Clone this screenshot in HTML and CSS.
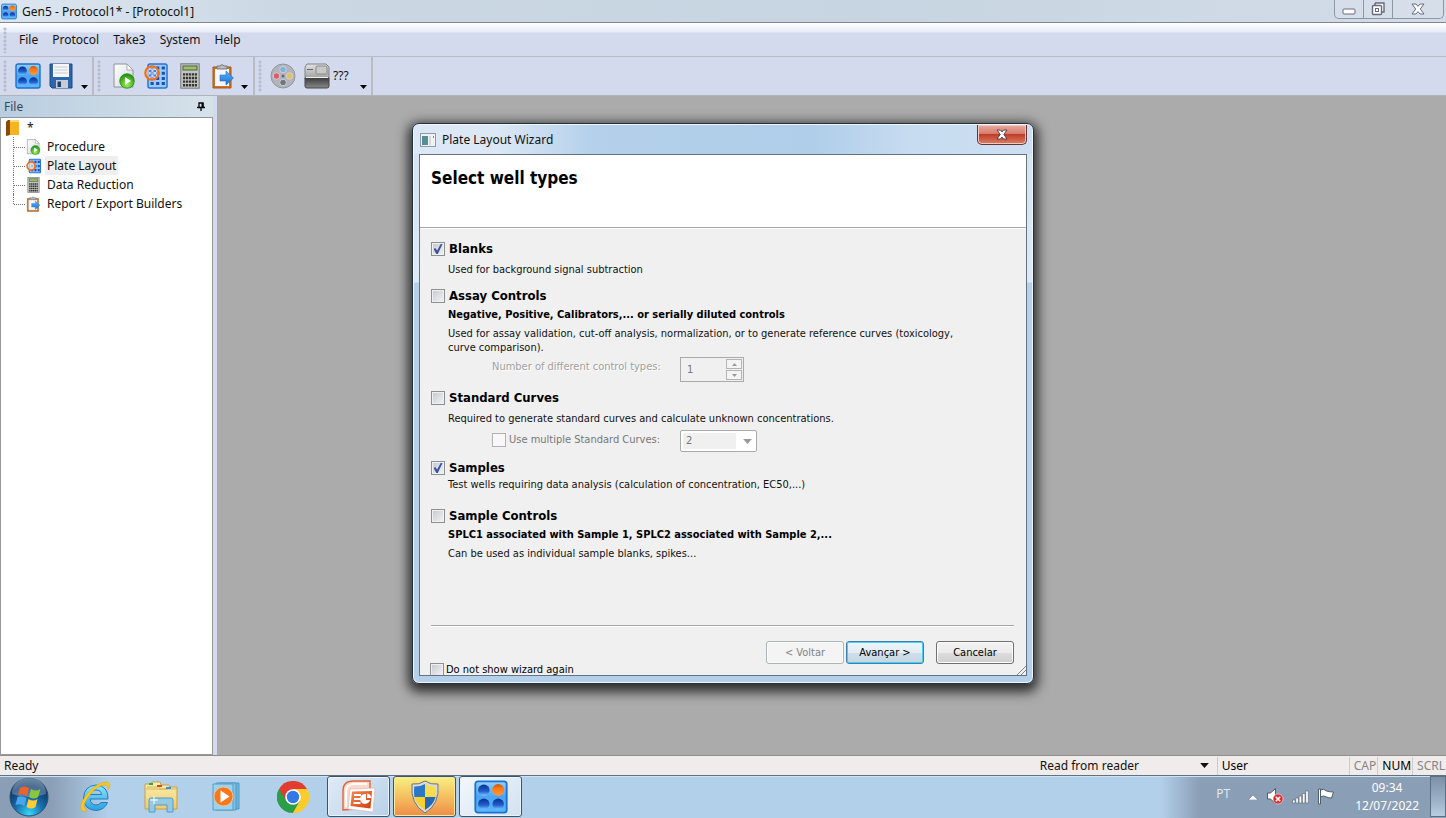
FILE: index.html
```html
<!DOCTYPE html>
<html lang="pt">
<head>
<meta charset="utf-8">
<title>Gen5 - Protocol1* - [Protocol1]</title>
<link rel="stylesheet" href="styles.css">
</head>
<body>
<svg class="defs" width="0" height="0" aria-hidden="true">
  <defs>
    <linearGradient id="gBlue" x1="0" y1="0" x2="0" y2="1"><stop offset="0" stop-color="#8fd0ff"/><stop offset=".5" stop-color="#4aa4f4"/><stop offset="1" stop-color="#5ab8fa"/></linearGradient>
    <linearGradient id="gWell" x1="0" y1="0" x2="0" y2="1"><stop offset="0" stop-color="#0b2f8c"/><stop offset=".6" stop-color="#2160d0"/><stop offset="1" stop-color="#7cc4ff"/></linearGradient>
    <linearGradient id="gOrange" x1="0" y1="0" x2="0" y2="1"><stop offset="0" stop-color="#c65a14"/><stop offset=".4" stop-color="#ff7a14"/><stop offset="1" stop-color="#ff9a3c"/></linearGradient>
    <linearGradient id="gPage" x1="0" y1="0" x2="1" y2="1"><stop offset="0" stop-color="#fff"/><stop offset="1" stop-color="#d4d8dc"/></linearGradient>
    <radialGradient id="gGreen" cx=".5" cy=".75" r=".7"><stop offset="0" stop-color="#9cf04c"/><stop offset="1" stop-color="#1f9416"/></radialGradient>
    <linearGradient id="gSilver" x1="0" y1="0" x2="0" y2="1"><stop offset="0" stop-color="#e4e4e4"/><stop offset="1" stop-color="#9c9c9c"/></linearGradient>
    <linearGradient id="gDark" x1="0" y1="0" x2="0" y2="1"><stop offset="0" stop-color="#3c3c3c"/><stop offset="1" stop-color="#8a8a8a"/></linearGradient>
    <linearGradient id="gArrow" x1="0" y1="0" x2="0" y2="1"><stop offset="0" stop-color="#5ab4fa"/><stop offset="1" stop-color="#1b6fd6"/></linearGradient>
    <radialGradient id="gOrb" cx=".5" cy=".95" r=".95"><stop offset="0" stop-color="#35d8fa"/><stop offset=".4" stop-color="#1670ae"/><stop offset=".75" stop-color="#0f3c6c"/><stop offset="1" stop-color="#3c6288"/></radialGradient>
    <linearGradient id="gIe" x1="0" y1="0" x2="0" y2="1"><stop offset="0" stop-color="#8ce6fc"/><stop offset="1" stop-color="#2b9fe0"/></linearGradient>
    <linearGradient id="gFolder" x1="0" y1="0" x2="0" y2="1"><stop offset="0" stop-color="#fdf0b4"/><stop offset="1" stop-color="#eecb6c"/></linearGradient>
    <linearGradient id="gPpt" x1="0" y1="0" x2="1" y2="1"><stop offset="0" stop-color="#f48a54"/><stop offset="1" stop-color="#d23c0c"/></linearGradient>
  </defs>
  <symbol id="plate" viewBox="0 0 26 26">
    <rect x="1" y="1" width="24" height="24" rx="2" fill="url(#gBlue)" stroke="#1c72cc" stroke-width="1.4"/>
    <ellipse cx="7.5" cy="7.8" rx="4.4" ry="4.3" fill="url(#gWell)"/><ellipse cx="18.5" cy="7.6" rx="4.6" ry="4.5" fill="url(#gOrange)"/>
    <ellipse cx="7.5" cy="18.4" rx="4.4" ry="4.2" fill="url(#gWell)"/><ellipse cx="18.5" cy="18.4" rx="4.4" ry="4.2" fill="url(#gWell)"/>
  </symbol>
  <symbol id="procedure" viewBox="0 0 22 26">
    <path d="M1 1h13l6 6v17H1z" fill="url(#gPage)" stroke="#8c9298"/><path d="M14 1v6h6z" fill="#fff" stroke="#9aa0a6" stroke-width=".8"/>
    <circle cx="14" cy="18" r="7.3" fill="url(#gGreen)" stroke="#1b8016" stroke-width=".7"/><path d="M12 14l6 4-6 4z" fill="#fff"/>
  </symbol>
  <symbol id="wells" viewBox="0 0 24 26">
    <rect x="4" y="1" width="19" height="24" rx="2" fill="#9cccff" stroke="#2476d8" stroke-width="1.5"/>
    <path d="M6.5 5H22M6.5 10.2H22M6.5 15.4H22M6.5 20.6H22" stroke="#1d4fb4" stroke-width="3" stroke-dasharray="3.2 2.4"/>
    <circle cx="8" cy="10" r="6.7" fill="#e8edf8" fill-opacity=".55" stroke="#f66e16" stroke-width="2.2"/>
    <path d="M5 8h2.4M9.5 8H12M5 12.4h2.4M9.5 12.4H12" stroke="#4e7fd0" stroke-width="2"/>
  </symbol>
  <symbol id="wells-small" viewBox="0 0 16 16">
    <rect x="3.500" y=".8" width="12" height="14.400" rx="1" fill="#8cc2fc" stroke="#2476d8" stroke-width="1.200"/>
    <path d="M5.500 3.500H15M5.500 8H15M5.500 12.500H15" stroke="#1d4fb4" stroke-width="2.400" stroke-dasharray="2.200 1.300"/>
    <circle cx="5.500" cy="8" r="4.300" fill="#dfe8f6" fill-opacity=".7" stroke="#f66e16" stroke-width="1.900"/>
  </symbol>
  <symbol id="calc" viewBox="0 0 20 26">
    <rect x=".8" y=".8" width="18.4" height="24.4" fill="#c4c4c0" stroke="#777"/><rect x="3" y="3" width="14" height="4" fill="#9cc070" stroke="#4b653b"/>
    <path d="M3 11.4h14M3 15h14M3 18.6h14M3 22.2h14" stroke="#343434" stroke-width="2.4" stroke-dasharray="2.2 .75"/>
  </symbol>
  <symbol id="export" viewBox="0 0 22 26">
    <path d="M1 4h18v21H1z" fill="#c9752c" stroke="#a55617"/><path d="M3 6h14v17H3z" fill="#f6f7fa"/><path d="M5 6V3h3q2-3 4 0h3v3z" fill="#b8bcc2" stroke="#777"/>
    <path d="M8 12h6V8l7.5 7-7.5 7v-4H8z" fill="url(#gArrow)" stroke="#2368c0" stroke-width=".6"/>
  </symbol>
  <symbol id="caret" viewBox="0 0 7 4"><path d="M0 0h7L3.500 4z" fill="currentColor"/></symbol>
</svg>

<div class="desktop">
  <header class="titlebar">
    <svg class="app-icon" width="16" height="17"><use href="#plate"/></svg>
    <h1 class="title">Gen5 - Protocol1* - [Protocol1]</h1>
    <div class="window-controls">
      <button class="ctl" aria-label="Minimize"><svg width="14" height="7"><rect x="1" y="1" width="12" height="5" rx="1" fill="#fff" stroke="#666a80"/></svg></button>
      <button class="ctl" aria-label="Restore"><svg width="14" height="14"><path d="M4 1h9v9h-2M4 1v2" fill="#fff" stroke="#666a80" stroke-width="1.4"/><rect x="1.500" y="3.500" width="9" height="9" rx="1" fill="#fff" stroke="#666a80" stroke-width="1.4"/><rect x="4.500" y="6.500" width="3" height="3" fill="#fff" stroke="#666a80"/></svg></button>
      <button class="ctl ctl-close" aria-label="Close"><svg width="14" height="12"><path d="M1 1h4l2 2.400L9 1h4L9.300 6l3.700 5H9L7 8.600 5 11H1l3.700-5z" fill="#fff" stroke="#666a80"/></svg></button>
    </div>
  </header>

  <nav class="menubar">
    <span class="grip"></span>
    <button class="menu">File</button><button class="menu">Protocol</button><button class="menu">Take3</button><button class="menu">System</button><button class="menu">Help</button>
  </nav>

  <div class="toolbars">
    <div class="toolbar">
      <span class="grip"></span>
      <button class="tool" aria-label="Plate"><svg width="26" height="26"><use href="#plate"/></svg></button>
      <button class="tool" aria-label="Save"><svg width="24" height="26" viewBox="0 0 24 26"><path d="M1 1h22v24H3l-2-2z" fill="#2d66ac" stroke="#1c4a86"/><rect x="4" y="1" width="16" height="13" fill="#f4f6f8"/><path d="M5.500 4h13M5.500 7h13M5.500 10h13" stroke="#c7ccd2"/><rect x="7" y="17" width="12" height="8" fill="#c8cdd4"/><rect x="8.500" y="18.500" width="3.500" height="5.500" fill="#1c4272"/></svg></button>
      <button class="drop" aria-label="More"><svg width="7" height="4"><use href="#caret"/></svg></button>
    </div>
    <div class="toolbar toolbar-wide">
      <span class="grip"></span>
      <button class="tool" aria-label="Procedure"><svg width="22" height="26"><use href="#procedure"/></svg></button>
      <button class="tool" aria-label="Plate layout"><svg width="24" height="26"><use href="#wells"/></svg></button>
      <button class="tool" aria-label="Data reduction"><svg width="20" height="26"><use href="#calc"/></svg></button>
      <button class="tool" aria-label="Export"><svg width="22" height="26"><use href="#export"/></svg></button>
      <button class="drop" aria-label="More"><svg width="7" height="4"><use href="#caret"/></svg></button>
    </div>
    <div class="toolbar toolbar-reader">
      <span class="grip"></span>
      <button class="tool" aria-label="Protocol reel"><svg width="26" height="26" viewBox="0 0 26 26"><circle cx="13" cy="13" r="12" fill="#b2b4bb" stroke="#94969e"/><circle cx="13" cy="6.500" r="3.300" fill="#7fb2de" stroke="#d0d0d6"/><circle cx="6.500" cy="13" r="3.300" fill="#dc5c68" stroke="#d0d0d6"/><circle cx="19.500" cy="13" r="3.300" fill="#e4c05c" stroke="#d0d0d6"/><circle cx="13" cy="19.500" r="3.300" fill="#74767e" stroke="#d0d0d4"/><circle cx="13" cy="13" r="1.500" fill="#686a72"/></svg></button>
      <button class="tool reader" aria-label="Reader"><svg width="26" height="26" viewBox="0 0 26 26"><path d="M3 1h19l3 3v12H1V4z" fill="url(#gSilver)" stroke="#828282"/><path d="M1 15h24v8q0 2-2 2H3q-2 0-2-2z" fill="url(#gDark)" stroke="#444"/><rect x="12" y="3" width="11" height="8" rx="1" fill="#c8c8c8" stroke="#8a8a8a"/><path d="M3 6.500h6" stroke="#666"/><path d="M2 14.500h22" stroke="#eee"/></svg><span>???</span></button>
      <button class="drop" aria-label="More"><svg width="7" height="4"><use href="#caret"/></svg></button>
    </div>
  </div>

  <main class="workspace">
    <aside class="panel">
      <div class="panel-head"><span>File</span><button class="pin" aria-label="Pin"><svg width="8" height="9"><path d="M0 5.500h8M2 5V1h4v4M4 6v3" fill="none" stroke="#000" stroke-width="1.300"/><path d="M4.500 1H6.500v4h-2z"/></svg></button></div>
      <div class="tree">
        <div class="tree-root"><svg width="14" height="16"><path d="M0 2l3-2h10v15H3L0 16z" fill="#f6b420"/><path d="M0 2l2-2h2v15l-4 1z" fill="#8a4a0a"/><path d="M4 0h9v2H4z" fill="#ffd680"/></svg><span>*</span></div>
        <ul class="branches">
          <li><a href="#"><svg width="15" height="16"><use href="#procedure"/></svg><span>Procedure</span></a></li>
          <li><a href="#" class="current"><svg width="15" height="16"><use href="#wells-small"/></svg><span>Plate Layout</span></a></li>
          <li><a href="#"><svg width="15" height="16"><use href="#calc"/></svg><span>Data Reduction</span></a></li>
          <li><a href="#"><svg width="15" height="16"><use href="#export"/></svg><span>Report / Export Builders</span></a></li>
        </ul>
      </div>
    </aside>

    <div class="overlay">
      <section class="dialog" role="dialog" aria-labelledby="dlg-title">
        <header class="dialog-bar">
          <svg width="16" height="14"><rect x=".5" y=".5" width="15" height="13" fill="#f0f2f4" stroke="#909aa6"/><rect x="2" y="3" width="6" height="9" fill="#4f9684"/><path d="M2 3h3v9H2z" fill="#5a86a8" opacity=".6"/><path d="M9 3h2v9H9z" fill="#d5dadf"/><path d="M13 3h1v2h-1z" fill="#62a070"/></svg>
          <h2 class="dialog-title" id="dlg-title">Plate Layout Wizard</h2>
          <button class="dialog-close" aria-label="Close"><svg width="12" height="11"><path d="M1 1h3.500L6 3l1.500-2H11L7.900 5.500 11 10H7.500L6 8l-1.500 2H1l3.100-4.500z" fill="#fff" stroke="#5a3c46"/></svg></button>
        </header>
        <form class="client">
          <div class="client-head"><h3>Select well types</h3></div>
          <div class="client-body">
            <div class="group">
              <label class="head"><input type="checkbox" checked>Blanks</label>
              <p class="desc">Used for background signal subtraction</p>
            </div>
            <div class="group">
              <label class="head"><input type="checkbox">Assay Controls</label>
              <p class="sub">Negative, Positive, Calibrators,... or serially diluted controls</p>
              <p class="desc close">Used for assay validation, cut-off analysis, normalization, or to generate reference curves (toxicology,<br>curve comparison).</p>
              <div class="option">
                <label class="option-label etched" for="types">Number of different control types:</label>
                <div class="spin"><input type="number" id="types" value="1" disabled><span class="spin-buttons"><button type="button" disabled aria-label="Increase"><svg class="up" width="5" height="3"><path d="M0 0h5L2.500 3z" fill="#999"/></svg></button><button type="button" disabled aria-label="Decrease"><svg width="5" height="3"><path d="M0 0h5L2.500 3z" fill="#999"/></svg></button></span></div>
              </div>
            </div>
            <div class="group">
              <label class="head"><input type="checkbox">Standard Curves</label>
              <p class="desc">Required to generate standard curves and calculate unknown concentrations.</p>
              <div class="option option-curves">
                <label class="option-label muted"><input type="checkbox" disabled>Use multiple Standard Curves:</label>
                <div class="combo"><select disabled aria-label="Standard curve count"><option>2</option></select><svg width="9" height="5" viewBox="0 0 7 4"><path d="M0 0h7L3.500 4z" fill="#999"/></svg></div>
              </div>
            </div>
            <div class="group">
              <label class="head"><input type="checkbox" checked>Samples</label>
              <p class="desc tight">Test wells requiring data analysis (calculation of concentration, EC50,...)</p>
            </div>
            <div class="group group-last">
              <label class="head"><input type="checkbox">Sample Controls</label>
              <p class="sub">SPLC1 associated with Sample 1, SPLC2 associated with Sample 2,...</p>
              <p class="desc close">Can be used as individual sample blanks, spikes...</p>
            </div>
            <hr class="rule">
            <div class="actions">
              <button type="button" class="btn" disabled>&lt; Voltar</button>
              <button type="button" class="btn btn-default">Avançar &gt;</button>
              <button type="button" class="btn btn-cancel">Cancelar</button>
            </div>
            <label class="skip"><input type="checkbox">Do not show wizard again</label>
          </div>
          <svg class="sizer" width="9" height="9"><path d="M0 9l9-9M4 9l5-5" stroke="#888" fill="none"/></svg>
        </form>
      </section>
    </div>
  </main>

  <footer class="status">
    <span class="ready">Ready</span>
    <button class="reader-mode">Read from reader<svg width="9" height="5" viewBox="0 0 7 4"><use href="#caret"/></svg></button>
    <span class="cell user">User</span>
    <span class="cell off">CAP</span><span class="cell">NUM</span><span class="cell off">SCRL</span>
  </footer>

  <nav class="taskbar">
    <button class="start" aria-label="Start"><svg width="40" height="40" viewBox="0 0 40 40"><circle cx="20" cy="20" r="19" fill="url(#gOrb)" stroke="#294d70"/><path d="M3 17a17 17 0 0 1 34 0q-17 6-34 0z" fill="#fff" opacity=".25"/>
      <path d="M11 11q4-3 9 0l-2 8q-4-3-9-1z" fill="#f0622c"/><path d="M22 12q5 3 9.500 0l-2.500 8q-4 3-9 0z" fill="#8cc63c"/><path d="M8.500 20q4-2 9 1l-2 8q-4-3-9-1z" fill="#4aa6ec"/><path d="M19.500 22q5 3 9 0l-2 8q-4 3-9 0z" fill="#fccc38"/></svg></button>
    <button class="task" aria-label="Internet Explorer"><svg width="34" height="34" viewBox="0 0 34 34"><path d="M30 19H12q1 6 6 6 3 0 5-2.500h6.500Q26.500 30 18 30.500 6 30 5.500 18 6 6 18 5 30.500 6 30 19zM12 14.500h11.500Q23 10 18 10t-6 4.500z" fill="url(#gIe)" stroke="#1f7cc0"/><path d="M5 31Q-1 27 9 14 19 2 29 2q5 1 1 8 1-5-3-5-8 0-16 11Q2 28 9 30q-2 2-4 1z" fill="#fcc81c" stroke="#dca410" stroke-width=".5"/></svg></button>
    <button class="task" aria-label="Explorer"><svg width="36" height="34" viewBox="0 0 36 34"><path d="M2 4h6l1-2h8l1 3h8l1 2h7v22H2z" fill="url(#gFolder)" stroke="#c8a040"/><path d="M2 9h32M4 7h13M16 9h9" stroke="#d8b458"/><rect x="6" y="3" width="4" height="2" fill="#2cae30"/><rect x="14" y="5" width="5" height="2" fill="#d8442c"/><rect x="23" y="7" width="5" height="2" fill="#3890e0"/><path d="M6 32V20q0-2 2-2h20q2 0 2 2v12h-6v-7H12v7z" fill="#8cc9ec" fill-opacity=".9" stroke="#509cc8"/><path d="M11 16v8M7 20h8" stroke="#fff"/></svg></button>
    <button class="task" aria-label="Media Player"><svg width="32" height="30" viewBox="0 0 32 30"><path d="M8 1h20v26H8z" fill="#6cb4da" stroke="#4c98c4"/><path d="M5 1h20v27H5z" fill="#84c4e4" stroke="#4c98c4"/><path d="M2 2h20v26H2z" fill="#9cd2ee" stroke="#509cc8"/><circle cx="12.500" cy="14.500" r="9.500" fill="#f47820" stroke="#f8c090"/><path d="M9.500 8.500l9 6-9 6z" fill="#fff"/></svg></button>
    <button class="task" aria-label="Chrome"><svg width="32" height="32" viewBox="0 0 32 32"><path d="M16 16L2.100 8A16 16 0 0 1 29.900 8z" fill="#e23c30"/><path d="M16 16L29.900 8A16 16 0 0 1 16 32z" fill="#fccb2c"/><path d="M16 16L16 32A16 16 0 0 1 2.100 8z" fill="#2c9e48"/><path d="M16 8h13.900L23 20z" fill="#fccb2c"/><path d="M22.900 20L16 32l-6-10z" fill="#2c9e48"/><path d="M2.100 8L9 20l7-12z" fill="#e23c30"/><path d="M2.100 8L9 20l7 4-4 7.500A16 16 0 0 1 2.100 8z" fill="#2c9e48"/><path d="M23 20l-7 12A16 16 0 0 0 29.900 8H16z" fill="#fccb2c"/><circle cx="16" cy="16" r="7.800" fill="#fff"/><circle cx="16" cy="16" r="6.200" fill="#3478e8"/></svg></button>
    <button class="task open" aria-label="PowerPoint"><svg width="34" height="34" viewBox="0 0 34 34"><path d="M1 30V11Q1 1 11 1h17v10H13v18z" fill="#fbd8c8" stroke="#e0643c" stroke-width="1.400"/><path d="M4 27V12q0-8 8-8h13" fill="none" stroke="#fff" stroke-width="2"/><path d="M8 9l25-1-2 24-25-3z" fill="#fff" stroke="#dcb8a8" stroke-width=".7"/><path d="M10 11.500l20-.5-1.500 17.500L8.500 26z" fill="url(#gPpt)"/><path d="M12 15h7M12 19h7M11.500 23h7" stroke="#fff" stroke-width="2"/><path d="M24 14a5 5 0 1 0 4 6h-4z" fill="#fff"/><path d="M25 13.500a4.500 4.500 0 0 1 4 4.500h-4z" fill="#fff"/></svg></button>
    <button class="task open attention" aria-label="Security"><svg width="30" height="34" viewBox="0 0 30 34"><path d="M15 1q6 4 13 3 2 20-13 29Q0 24 2 4q7 1 13-3z" fill="#d8dcdc" stroke="#6c7478"/><path d="M15 4v13H4.400Q3.600 12 4.300 6.500 10 6.700 15 4z" fill="#2c78c8"/><path d="M15 4q5 2.700 10.700 2.500Q26.400 12 25.600 17H15z" fill="#f8dc4c"/><path d="M4.400 17H15v13Q6.500 25 4.400 17z" fill="#f8d02c"/><path d="M25.600 17H15v13q8.500-5 10.600-13z" fill="#2468b8"/></svg></button>
    <button class="task open active" aria-label="Gen5"><svg width="34" height="34"><use href="#plate"/></svg></button>
    <div class="tray">
      <span class="lang">PT</span>
      <button aria-label="Hidden icons"><svg width="10" height="6"><path d="M0 6l5-5 5 5z" fill="#fff" stroke="#687888" stroke-width=".6"/></svg></button>
      <button aria-label="Volume"><svg width="18" height="17"><path d="M1.500 5h3l5-4.500v15l-5-4.500h-3z" fill="#fff" stroke="#4f5d6c"/><circle cx="12" cy="11" r="5" fill="#dc2c30" stroke="#fff" stroke-width=".5"/><path d="M9.800 8.800l4.400 4.400M14.200 8.800l-4.400 4.400" stroke="#fff" stroke-width="1.600"/></svg></button>
      <button aria-label="Network"><svg width="17" height="14"><path d="M.5 10h2.600v3H.5zM3.800 8h2.600v5H3.800zM7.100 6h2.600v7H7.100zM10.400 3.500H13V13h-2.600zM13.700 1h2.600v12h-2.600z" fill="#fff" stroke="#516070" stroke-width=".6"/></svg></button>
      <button aria-label="Action center"><svg width="18" height="17"><path d="M1.500 1h2v15h-2zM3.500 2q3-2 6 1 3 1 7 1l-2 6q-3 0-5-1-3-2-6 0z" fill="#fff" stroke="#4f5d6c"/></svg></button>
      <div class="clock"><span>09:34</span><span>12/07/2022</span></div>
      <button class="peek" aria-label="Show desktop"></button>
    </div>
  </nav>
</div>
</body>
</html>
```
FILE: styles.css
```css
* { box-sizing: border-box; }

body {
  margin: 0;
  font: 12px/16px "Noto Sans", "Open Sans", sans-serif;
  color: #111;
}

h1, h2, h3, p, ul { margin: 0; padding: 0; font-size: inherit; font-weight: normal; }
ul { list-style: none; }
button, input, select { font: inherit; color: inherit; margin: 0; }
button { padding: 0; border: 0; background: none; }
a { color: inherit; text-decoration: none; }
svg { display: block; flex: none; }
.defs { position: absolute; }

.desktop { display: flex; flex-direction: column; height: 100vh; overflow: hidden; }

/* Main window title */
.titlebar {
  display: flex;
  align-items: center;
  flex: none;
  height: 23px;
  padding: 1px 0 0 1px;
  background: linear-gradient(90deg, #dce6f0, #cbd8e4 20%, #c6d5e1 60%, #d3dce8);
  border-bottom: 1px solid #80868e;
}
.title { margin-left: 5px; }
.window-controls {
  display: flex;
  align-self: flex-start;
  margin: -1px 2px 0 auto;
  border: 1px solid #8c97a4;
  border-top: 0;
  border-radius: 0 0 5px 5px;
  background: #d6dfe9;
}
.ctl { display: grid; place-items: center; width: 29px; height: 18px; border-right: 1px solid #8c97a4; }
.ctl:first-child { padding-top: 5px; }
.ctl-close { width: 50px; border: 0; }

/* Menus and toolbars */
.menubar {
  display: flex;
  align-items: center;
  flex: none;
  height: 34px;
  padding: 1px 0 0 3px;
  border-bottom: 1px solid #b9bcc4;
  background: linear-gradient(#fff, #e8ecf7 9px, #d4daed 10px);
}
.grip {
  align-self: stretch;
  flex: none;
  width: 4px;
  margin: 3px 0;
  background: radial-gradient(circle at 2px 2px, #b8bdcb 1px, transparent 2px) 0 0 / 4px 4px;
}
.menu { padding: 0 7px; line-height: 20px; }
.menu:nth-child(2) { margin-left: 5px; }
.toolbars { display: flex; flex: none; height: 39px; background: #d4daed; border-bottom: 1px solid #b0b3b8; }
.toolbar {
  display: flex;
  align-items: center;
  gap: 8px;
  padding: 0 4px 0 3px;
  border-right: 2px solid #b9bcc4;
}
.toolbar-wide { gap: 12px; padding-right: 5px; }
.toolbar-wide .tool:nth-child(3) { margin-left: -3px; }
.toolbar-wide .drop { margin-left: -5px; }
.toolbar-reader .drop { margin-left: 3px; }
.tool { display: flex; align-items: center; gap: 3px; }
.drop { align-self: flex-end; padding-bottom: 6px; color: #000; }

/* Document area */
.workspace { position: relative; display: flex; flex: 1; min-height: 0; background: #ababab; }
.panel { display: flex; flex-direction: column; width: 217px; padding-right: 4px; background: #d4daed; }
.panel-head {
  display: flex;
  align-items: center;
  justify-content: space-between;
  height: 22px;
  padding: 0 8px 0 4px;
  color: #3c4650;
  border-bottom: 1px solid #8e959c;
  background: linear-gradient(90deg, #b9cde0, #d6e2ea);
}
.tree { flex: 1; border: 1px solid #999; border-top: 0; background: #fff; line-height: 19px; }
.tree-root { display: flex; align-items: center; gap: 7px; height: 19px; padding-left: 5px; }
.branches { padding-left: 12px; }
.branches li { position: relative; height: 19px; padding-left: 12px; border-left: 1px dotted #777; }
.branches li:last-child { border-color: transparent; }
.branches li::before { content: ""; position: absolute; left: 0; top: 10px; width: 11px; border-top: 1px dotted #777; }
.branches li:last-child::after { content: ""; position: absolute; left: -1px; top: 0; height: 10px; border-left: 1px dotted #777; }
.branches a { display: flex; align-items: center; gap: 4px; }
.branches span { padding: 0 2px; }
.branches .current span { background: #efefef; }

/* Wizard */
.overlay { position: absolute; inset: 0; display: flex; justify-content: center; align-items: flex-start; padding-top: 27px; }
.dialog {
  width: 622px;
  padding: 0 6px 7px;
  border: 1px solid #25313d;
  border-radius: 7px;
  background: linear-gradient(#d5e3f2 30px, #dde9f6 158px, #b4d0eb 159px);
  box-shadow: inset 0 0 0 1px #eef5fb, 0 4px 12px 4px #000b;
  font: 11px/14px "DejaVu Sans Condensed", "DejaVu Sans", sans-serif;
}
.dialog-bar {
  display: flex;
  align-items: center;
  height: 29px;
  margin: 1px -5px 0;
  padding-left: 6px;
  border-radius: 5px 5px 0 0;
  background: linear-gradient(90deg, #dce8f5 80px, #b4d0eb 180px, #b0cee9 400px, #c8dcf1 500px, #ccdff2);
  font: 12px/16px "Noto Sans", "Open Sans", sans-serif;
}
.dialog-title { margin-left: 6px; }
.dialog-close {
  display: grid;
  place-items: center;
  align-self: flex-start;
  width: 50px;
  height: 20px;
  margin: 0 5px 0 auto;
  border: 1px solid #6c3038;
  border-top: 0;
  border-radius: 0 0 5px 5px;
  background: linear-gradient(#e6aca0, #d97c6c 45%, #bf3d28 50%, #d98068);
  box-shadow: inset 0 0 0 1px #f3c8c0;
}
.client { position: relative; border: 1px solid #66727e; background: #f0f0f0; }
.client-head { height: 73px; padding: 13px 11px; border-bottom: 1px solid #a8a8a8; background: #fff; }
.client-head h3 { font-size: 17px; line-height: 20px; font-weight: bold; color: #000; }
.client-body { padding: 12px 11px 0; border-top: 1px solid #fff; }
.group { margin-bottom: 8px; }
.head { display: flex; align-items: center; gap: 5px; line-height: 16px; font-size: 13px; font-weight: bold; color: #000; }
.sub { margin: 4px 0 0 17px; font-weight: bold; color: #000; }
.desc { margin: 6px 0 0 17px; }
.group:first-child { margin-bottom: 11px; }
.desc.close { margin-top: 5px; }
.desc.tight { margin-top: 2px; }
.option { display: flex; align-items: flex-start; padding: 2px 0 0 61px; }
.option-curves { padding-top: 4px; margin-bottom: 7px; }
.option-label { display: flex; align-items: center; gap: 3px; width: 188px; }
.option-curves .option-label { line-height: 20px; }
.etched { padding-top: 3px; color: #a0a0a0; text-shadow: 1px 1px #fff; }
.muted { color: #777; }
.group-last { margin: 16px 0 0; }

input[type="checkbox"] {
  display: grid;
  place-items: center;
  flex: none;
  appearance: none;
  width: 14px;
  height: 14px;
  border: 1px solid #8e8f8f;
  background: linear-gradient(135deg, #c4c8cf, #f4f4f4);
  background-clip: content-box;
  padding: 1px;
}
.head input { margin-right: -1px; }
input[type="checkbox"]:checked::before {
  content: "";
  width: 9px;
  height: 10px;
  background: #3c54a0;
  clip-path: polygon(0 50%, 20% 40%, 40% 65%, 80% 0, 100% 0, 48% 100%, 32% 100%);
}
input[type="checkbox"]:disabled { border-color: #b1b1b1; background: #f8f8f8; }

.spin { display: flex; width: 64px; height: 25px; padding: 1px; border: 1px solid #aaa; background: #f0f0f0; }
.spin input { flex: 1; min-width: 0; padding: 0 5px; border: 0; background: none; color: #777; appearance: textfield; }
.spin input::-webkit-inner-spin-button { appearance: none; }
.spin-buttons { display: grid; gap: 1px; width: 16px; }
.spin-buttons button { display: grid; place-items: center; border: 1px solid #b4b4b4; background: #f4f4f4; }
.up { transform: rotate(180deg); }
.combo { display: flex; align-items: center; width: 77px; height: 22px; padding: 2px 4px 2px 2px; border: 1px solid #aaa; border-radius: 2px; background: #fff; }
.combo select { flex: 1; height: 16px; margin-right: 7px; padding: 0 3px; border: 0; appearance: none; background: #f0f0f0; color: #777; opacity: 1; }

.rule { height: 2px; margin: 64px 0 0; border: 0; border-top: 1px solid #a8a8a8; background: #fff; }
.actions { display: flex; justify-content: flex-end; gap: 2px; margin-top: 14px; }
.actions, .rule { margin-right: 1px; }
.btn {
  width: 78px;
  height: 23px;
  border: 1px solid #707070;
  border-radius: 3px;
  background: linear-gradient(#f3f3f3, #ebebeb 50%, #ddd 51%, #cfcfcf);
  box-shadow: inset 0 0 0 1px #fcfcfc;
  color: #000;
}
.btn:disabled { border-color: #adb2b5; background: #f4f4f4; color: #838383; }
.btn-default { border-color: #3c7fb1; box-shadow: inset 0 0 0 1px #48d0f4; background: linear-gradient(#f0f5f8, #e2ecf2 50%, #d0e0ea 51%, #c4d6e0); }
.btn-cancel { margin-left: 10px; }
.skip { display: flex; gap: 2px; height: 12px; margin: -1px 0 0 -1px; overflow: hidden; color: #000; }
.sizer { position: absolute; right: 0; bottom: 0; }

/* Status line */
.status { display: flex; align-items: center; flex: none; height: 20px; padding-left: 4px; background: #f0eceb; border-top: 1px solid #8e8e8e; line-height: 18px; }
.ready { flex: 1; }
.reader-mode { display: flex; align-items: center; justify-content: space-between; width: 169px; margin-right: 8px; }
.cell { padding: 0 1px 0 4px; border-left: 1px solid #d0cccb; color: #000; }
.user { width: 132px; }
.off { color: #858585; }

/* Taskbar */
.taskbar {
  display: flex;
  align-items: stretch;
  gap: 3px;
  flex: none;
  height: 43px;
  padding-bottom: 1px;
  border-top: 1px solid #5f7282;
  box-shadow: inset 0 1px #cfe2f2;
  background:
    linear-gradient(90deg, #8a9eb5 50px, #8a9eb500 110px),
    linear-gradient(270deg, #8a9eb5 246px, #8a9eb500 286px),
    #b3d0eb;
}
.start { display: grid; place-items: center; width: 60px; padding-right: 2px; }
.task { display: grid; place-items: center; width: 63px; }
.open { border: 1px solid #3e5468; border-radius: 3px; background: linear-gradient(135deg, #dfebf7, #b8d0e8); box-shadow: inset 0 0 0 1px #eaf3fb; }
.attention { background: linear-gradient(#f8f080, #f4c060 50%, #ee8c48); box-shadow: inset 0 0 0 1px #fbe8a0; }
.active { background: linear-gradient(135deg, #f2f7fc, #d2e2f2); }
.tray { display: flex; align-items: center; gap: 8px; margin-left: auto; color: #fff; }
.lang { padding-bottom: 6px; margin-right: 10px; color: #e0e8f0; }
.clock { display: flex; flex-direction: column; align-items: center; line-height: 18px; margin: 0 3px 0 12px; }
.peek { align-self: stretch; width: 16px; border: 1px solid #5c7084; background: linear-gradient(#7c91a8, #9cb2c8 60%, #b8cce0); }
```
